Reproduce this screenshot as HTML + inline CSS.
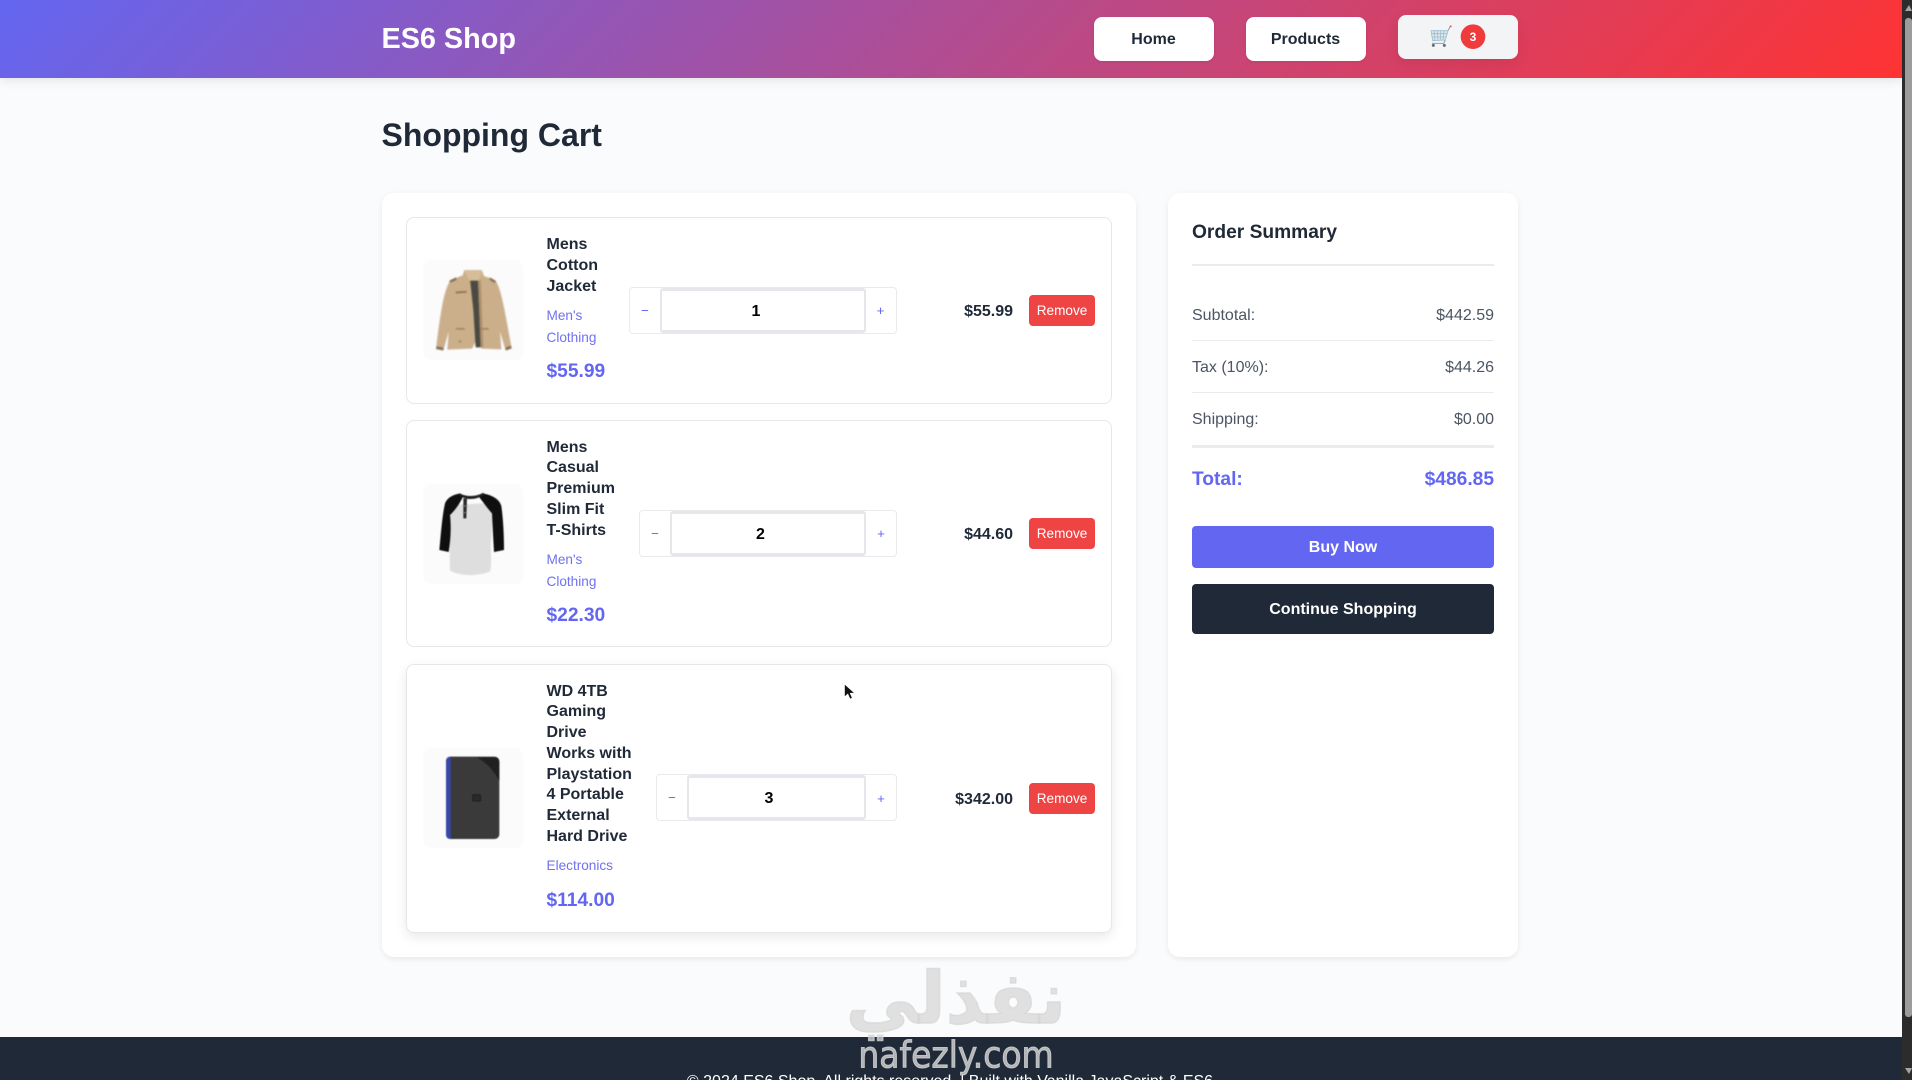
<!DOCTYPE html>
<html lang="en">
<head>
<meta charset="utf-8">
<title>ES6 Shop - Cart</title>
<style>
html,body{margin:0;padding:0;width:1912px;height:1080px;overflow:hidden;background:#fafbfc;font-family:"Liberation Sans",sans-serif;color:#1f2937}
*{box-sizing:border-box}
.a,.t{position:absolute}
.t{white-space:nowrap}
header{position:absolute;left:0;top:0;width:1902px;height:78px;background:linear-gradient(135deg,#6366f1 0%,#ff3333 100%);box-shadow:0 2px 10px rgba(0,0,0,.1)}
.nav{position:absolute;width:120px;height:44px;background:#fff;border-radius:8px;text-align:center;font-weight:700;font-size:16px;line-height:46px;color:#1f2937;box-shadow:0 1px 3px rgba(0,0,0,.08);text-indent:-1px}
.panel{position:absolute;background:#fff;border-radius:12px;box-shadow:0 3px 6px -1px rgba(0,0,0,.05),0 1px 8px rgba(0,0,0,.04)}
.item{position:absolute;left:406px;width:706px;background:#fff;border:1px solid #e5e7eb;border-radius:8px}
.img{position:absolute;left:423px;width:100px;height:100px;background:#fbfbfc;border-radius:8px}
.name{position:absolute;left:546.5px;font-weight:700;font-size:16px;line-height:20.8px;color:#1f2937;white-space:nowrap}
.cat{position:absolute;left:546.5px;font-size:13.6px;line-height:21.76px;color:#6366f1;white-space:nowrap;opacity:.92}
.price{position:absolute;left:546.5px;font-size:19.2px;font-weight:700;line-height:24px;color:#6366f1;white-space:nowrap}
.qty{position:absolute;height:47px;border:1px solid #e8eaed;border-radius:4px;background:#fff}
.inp{position:absolute;height:45px;background:#fff;border:2px solid #e5e7eb;border-radius:3px;border-top-width:3px;border-bottom-width:3px}
.num{position:absolute;width:20px;text-align:center;font-weight:700;font-size:16px;line-height:20px;color:#000}
.sg{position:absolute;width:20px;text-align:center;font-size:13.3px;line-height:20px;color:#6366f1}
.lt{position:absolute;width:100px;left:913px;text-align:right;font-weight:700;font-size:16px;line-height:20px;color:#1f2937}
.rm{position:absolute;left:1029px;width:66px;height:31px;background:#ef4444;color:#fff;border-radius:4px;text-align:center;font-size:13.6px;line-height:31px}
.row{position:absolute;left:1192px;width:302px;font-size:16px;line-height:24px;color:#4b5563;display:flex;justify-content:space-between}
.hr{position:absolute;left:1192px;width:302px;height:2px;background:#e9ebee}
.btn{position:absolute;left:1192px;width:302px;border-radius:4px;color:#fff;text-align:center;font-weight:700;font-size:16px}
footer{position:absolute;left:0;top:1037px;width:1902px;height:43px;background:#1f2937;color:#fff;overflow:hidden}
</style>
</head>
<body>
<header></header>
<div class="t" style="left:381.500px;top:21px;font-size:28.8px;font-weight:700;line-height:37px;color:#fff">ES6 Shop</div>
<div class="nav" style="left:1094px;top:17px">Home</div>
<div class="nav" style="left:1246px;top:17px">Products</div>
<div class="nav" style="left:1398px;top:15px;background:#f3f4f6;box-shadow:0 5px 14px rgba(0,0,0,.08)"></div>
<svg class="a" style="left:1380px;top:0" width="160" height="80" viewBox="0 0 480 240">
<g fill="none" stroke="#9dbccb" stroke-width="2.4">
<path d="M153 92 L204 92 L196 120 L158 122 Z" fill="#dbe8ee"/>
<path d="M162 92 L165 122 M172 92 L174 121 M182 92 L182 121 M192 92 L189 120 M155 101 L202 101 M156 111 L199 111"/>
<path d="M204 92 L210 80 M196 120 L191 130 L156 130" stroke="#8aa3b0" stroke-width="3"/>
</g>
<circle cx="212" cy="79" r="3" fill="#e0567a"/>
<circle cx="160" cy="136" r="4.5" fill="#5e6e76"/>
<circle cx="193" cy="136" r="4.5" fill="#5e6e76"/>
<circle cx="279" cy="110" r="37" fill="#ef3b3b"/>
</svg>
<div class="t" style="left:1463px;top:28px;width:20px;text-align:center;font-size:12px;font-weight:700;line-height:18px;color:#fff">3</div>

<h1 class="t" style="margin:0;left:381.500px;top:115px;font-size:32px;font-weight:700;line-height:40px;color:#1f2937">Shopping Cart</h1>

<div class="panel" style="left:382px;top:193px;width:754px;height:764px"></div>
<div class="panel" style="left:1168px;top:193px;width:350px;height:764px"></div>

<!-- Item 1 -->
<div class="item" style="top:217px;height:187px"></div>
<div class="img" style="top:260px"></div>
<svg class="a" style="left:410px;top:240px;filter:blur(.7px)" width="130" height="130" viewBox="0 0 390 390">
<path d="M163 90 L215 90 L222 108 L254 120 C272 135 284 210 305 325 L287 332 L270 275 L274 328 L215 326 L200 300 L186 326 L112 329 L116 275 L100 332 L78 327 C90 230 100 150 122 120 L158 106 Z" fill="#cbaf8b"/>
<path d="M180 118 L204 118 L212 322 L197 322 L190 210 Z" fill="#4a4a42"/>
<path d="M204 118 L212 322 L220 322 L212 118 Z" fill="#ad8f6c"/>
<path d="M137 155 L170 153 L170 158 L137 160 Z M118 122 L138 112 L140 120 L121 128 Z M240 112 L258 123 L254 129 L238 119 Z" fill="#8a6f52"/>
<path d="M138 264 L164 264 L164 269 L138 269 Z M212 264 L236 264 L236 269 L212 269 Z M146 302 L154 302 L154 307 L146 307 Z" fill="#a0845f"/>
<path d="M80 319 L100 323 L100 331 L78 327 Z M286 323 L303 317 L305 325 L288 331 Z" fill="#84705a"/>
<path d="M163 90 L215 90 L208 122 L178 122 Z" fill="#d6bd98"/>
</svg>
<div class="name" style="top:235px">Mens<br>Cotton<br>Jacket</div>
<div class="cat" style="top:305px">Men's<br>Clothing</div>
<div class="price" style="top:360px">$55.99</div>
<div class="qty" style="left:629px;top:287px;width:268px"></div>
<div class="inp" style="left:660px;top:288px;width:206px"></div>
<div class="sg" style="left:635px;top:301px">−</div>
<div class="num" style="left:746px;top:302px">1</div>
<div class="sg" style="left:870.500px;top:301px">+</div>
<div class="lt" style="top:302px">$55.99</div>
<div class="rm" style="top:295px">Remove</div>

<!-- Item 2 -->
<div class="item" style="top:420px;height:227px"></div>
<div class="img" style="top:484px"></div>
<svg class="a" style="left:410px;top:470px;filter:blur(.6px)" width="130" height="130" viewBox="0 0 390 390">
<path d="M125 105 L218 100 L250 115 L242 230 C244 270 244 295 240 305 C200 320 150 318 120 302 C118 260 122 180 118 130 Z" fill="#dedede"/>
<path d="M150 70 C130 74 112 82 105 100 C96 140 92 200 88 240 L116 246 C122 210 124 170 120 135 C136 120 150 100 160 78 Z" fill="#0f0f10"/>
<path d="M218 70 C240 74 268 84 274 108 C280 150 282 200 282 240 L252 246 C250 210 248 170 246 130 C235 118 222 100 208 82 Z" fill="#0f0f10"/>
<path d="M150 70 C170 82 200 80 220 68 L222 74 C200 90 170 92 148 76 Z" fill="#202020"/>
<path d="M160 85 L171 85 L169 145 L160 145 Z" fill="#2a2a2a"/>
<circle cx="165" cy="128" r="2.5" fill="#888"/>
<circle cx="165" cy="108" r="2.5" fill="#888"/>
</svg>
<div class="name" style="top:437.500px">Mens<br>Casual<br>Premium<br>Slim Fit<br>T-Shirts</div>
<div class="cat" style="top:549px">Men's<br>Clothing</div>
<div class="price" style="top:604px">$22.30</div>
<div class="qty" style="left:639px;top:510px;width:258px"></div>
<div class="inp" style="left:670px;top:511px;width:196px"></div>
<div class="sg" style="left:645px;top:524px">−</div>
<div class="num" style="left:750.500px;top:525px">2</div>
<div class="sg" style="left:871px;top:524px">+</div>
<div class="lt" style="top:525px">$44.60</div>
<div class="rm" style="top:518px">Remove</div>

<!-- Item 3 -->
<div class="item" style="top:664px;height:269px;box-shadow:0 4px 12px rgba(0,0,0,.09)"></div>
<div class="img" style="top:748px"></div>
<svg class="a" style="left:410px;top:740px;filter:blur(.6px)" width="130" height="130" viewBox="0 0 390 390">
<defs><pattern id="d" width="4" height="4" patternUnits="userSpaceOnUse"><rect width="4" height="4" fill="#363636"/><circle cx="2" cy="2" r="1" fill="#505050"/></pattern></defs>
<rect x="108" y="50" width="160" height="247" rx="14" fill="url(#d)"/>
<path d="M108 64 Q108 50 122 50 L122 297 Q108 297 108 283 Z" fill="#3847a8"/>
<path d="M200 52 L254 52 Q268 52 268 66 L268 122 C250 90 230 68 200 52 Z" fill="#202020"/>
<rect x="188" y="164" width="24" height="19" rx="2" fill="#2a2a2a" stroke="#151515" stroke-width="2"/>
</svg>
<div class="name" style="top:681.500px">WD 4TB<br>Gaming<br>Drive<br>Works with<br>Playstation<br>4 Portable<br>External<br>Hard Drive</div>
<div class="cat" style="top:855px">Electronics</div>
<div class="price" style="top:889px">$114.00</div>
<div class="qty" style="left:656px;top:774px;width:241px"></div>
<div class="inp" style="left:687px;top:775px;width:179px"></div>
<div class="sg" style="left:662px;top:788px">−</div>
<div class="num" style="left:759px;top:789px">3</div>
<div class="sg" style="left:871px;top:789px">+</div>
<div class="lt" style="top:790px">$342.00</div>
<div class="rm" style="top:783px">Remove</div>

<!-- Summary -->
<div class="t" style="left:1192px;top:220px;font-size:19.2px;font-weight:700;line-height:25px;color:#1f2937">Order Summary</div>
<div class="hr" style="top:264px"></div>
<div class="row" style="top:304px"><span>Subtotal:</span><span>$442.59</span></div>
<div class="hr" style="top:340px;height:1px"></div>
<div class="row" style="top:356px"><span>Tax (10%):</span><span>$44.26</span></div>
<div class="hr" style="top:392px;height:1px"></div>
<div class="row" style="top:408px"><span>Shipping:</span><span>$0.00</span></div>
<div class="hr" style="top:445px;height:3px"></div>
<div class="row" style="top:468px;font-size:19.2px;font-weight:700;color:#6366f1"><span>Total:</span><span>$486.85</span></div>
<div class="btn" style="top:526px;height:42px;line-height:43px;background:#6366f1">Buy Now</div>
<div class="btn" style="top:584px;height:50px;line-height:52px;background:#1f2937">Continue Shopping</div>

<!-- Footer -->
<footer><div style="position:absolute;left:0;top:32px;width:1900px;text-align:center;font-size:16px;line-height:25.6px">© 2024 ES6 Shop. All rights reserved. | Built with Vanilla JavaScript &amp; ES6</div></footer>

<!-- Watermark -->
<div class="t" style="left:806px;top:953px;width:300px;text-align:center;font-family:'DejaVu Sans',sans-serif;font-weight:700;font-size:72px;line-height:90px;color:rgba(215,215,215,.75);-webkit-text-stroke:1.5px rgba(215,215,215,.75)" dir="rtl">نفذلي</div>
<div class="t" style="left:806px;top:1037px;width:300px;text-align:center;font-family:'DejaVu Sans',sans-serif;font-size:33px;line-height:40px;color:rgba(215,215,215,.8);-webkit-text-stroke:.9px rgba(215,215,215,.8);transform:scaleY(1.1);transform-origin:50% 85%">nafezly.com</div>

<!-- Cursor -->
<svg class="a" style="left:843px;top:683px" width="14" height="20" viewBox="0 0 14 20"><path d="M1.500 1 L1.500 14 L4.800 11 L7 16 L9.300 15 L7.200 10.300 L11.500 10 Z" fill="#111" stroke="#fff" stroke-width=".6"/></svg>

<!-- Scrollbar -->
<div class="a" style="left:1902px;top:0;width:10px;height:1080px;background:#2c2c2c"></div>
<div class="a" style="left:1905px;top:18px;width:7px;height:999px;background:#9c9c9c;border-radius:3px"></div>
<svg class="a" style="left:1902px;top:0" width="10" height="1080" viewBox="0 0 10 1080"><path d="M3 11 L7 5 L10 11 Z M3 1068 L10 1068 L7 1074 Z" fill="#a5a5a5"/></svg>
</body>
</html>
